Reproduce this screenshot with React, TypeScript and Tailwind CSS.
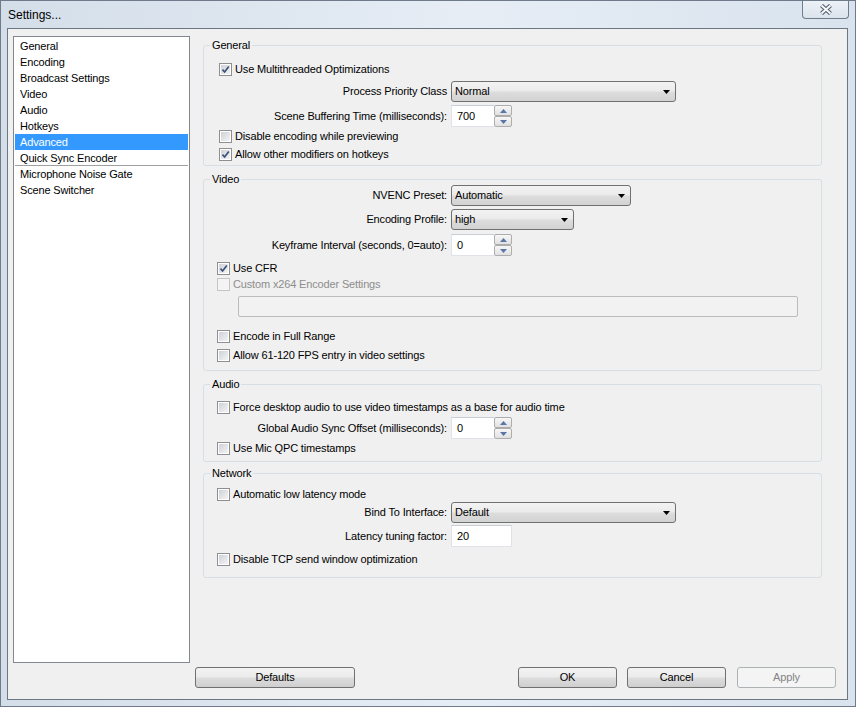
import type { ReactNode } from "react";

const NAV = [
  "General",
  "Encoding",
  "Broadcast Settings",
  "Video",
  "Audio",
  "Hotkeys",
  "Advanced",
  "Quick Sync Encoder",
];
const NAV_EXTRA = ["Microphone Noise Gate", "Scene Switcher"];

function CheckBox({ checked, disabled }: { checked?: boolean; disabled?: boolean }) {
  return (
    <div
      className={`h-[13px] w-[13px] shrink-0 border p-[1px] ${
        disabled ? "border-[#c5c5c5] bg-[#f4f4f4]" : "border-[#8f8f8f] bg-white"
      }`}
    >
      <div
        className={`relative h-full w-full ${
          disabled ? "bg-[#f4f4f4]" : "bg-[linear-gradient(135deg,#cdd1d7,#f4f4f5)]"
        }`}
      >
        {checked && (
          <svg viewBox="0 0 9 9" className="absolute inset-0 h-[9px] w-[9px]">
            <path d="M1.5 4.6 L3.6 7 L7.8 1.4" fill="none" stroke="#3d5279" strokeWidth="1.7" />
          </svg>
        )}
      </div>
    </div>
  );
}

function CheckRow({
  label,
  checked,
  disabled,
  className = "",
}: {
  label: string;
  checked?: boolean;
  disabled?: boolean;
  className?: string;
}) {
  return (
    <div className={"flex h-[16px] items-center " + className}>
      <CheckBox checked={checked} disabled={disabled} />
      <span className={`ml-[3px] whitespace-nowrap ${disabled ? "text-[#8d8d8d]" : ""}`}>{label}</span>
    </div>
  );
}

function FormRow({ label, className = "", children }: { label: string; className?: string; children: ReactNode }) {
  return (
    <div className={"flex items-center " + className}>
      <div className="w-[243px] whitespace-nowrap text-right">{label}</div>
      <div className="ml-[4px]">{children}</div>
    </div>
  );
}

function Combo({ value, className = "" }: { value: string; className?: string }) {
  return (
    <div
      className={
        "flex h-[21px] items-center justify-between rounded-[3px] border border-[#707070] bg-[linear-gradient(#f3f3f3_0%,#ebebeb_48%,#dddddd_52%,#d2d2d2_100%)] pl-[3px] pr-[5px] " +
        className
      }
    >
      <span>{value}</span>
      <svg width="7" height="4" viewBox="0 0 7 4">
        <path d="M0 0 H7 L3.5 4 Z" fill="#000" />
      </svg>
    </div>
  );
}

function SpinBtn({ up }: { up?: boolean }) {
  return (
    <div className="flex h-[11px] w-[18px] items-center justify-center rounded-[2px] border border-[#adadad] bg-[linear-gradient(#f7f7f7,#e1e1e1)]">
      <svg width="7" height="4" viewBox="0 0 7 4">
        <path d={up ? "M0 4 H7 L3.5 0 Z" : "M0 0 H7 L3.5 4 Z"} fill="#5a76a8" />
      </svg>
    </div>
  );
}

function Spin({ value }: { value: string }) {
  return (
    <div className="flex h-[22px] w-[61px]">
      <div className="flex h-full w-[43px] items-center border border-r-0 border-[#dfe3e8] border-t-[#c9ced5] bg-white pl-[5px]">
        {value}
      </div>
      <div className="flex flex-col">
        <SpinBtn up />
        <SpinBtn />
      </div>
    </div>
  );
}

function TextField({ value }: { value: string }) {
  return (
    <div className="flex h-[22px] w-[61px] items-center border border-[#dfe3e8] border-t-[#c9ced5] bg-white pl-[5px]">
      {value}
    </div>
  );
}

function Group({ title, className = "", children }: { title: string; className?: string; children: ReactNode }) {
  return (
    <div className={"relative rounded-[3px] border border-[#d5dfe5] " + className}>
      <span className="absolute -top-[8px] left-[6px] bg-[#f0f0f0] px-[2px] leading-[14px]">{title}</span>
      {children}
    </div>
  );
}

function Button({ label, disabled, className = "" }: { label: string; disabled?: boolean; className?: string }) {
  return (
    <div
      className={
        `flex h-[21px] items-center justify-center rounded-[3px] border ${
          disabled
            ? "border-[#adb2b5] bg-[#f4f4f4] text-[#838383]"
            : "border-[#707070] bg-[linear-gradient(#f3f3f3_0%,#ebebeb_48%,#dddddd_52%,#cfcfcf_100%)]"
        } ` + className
      }
    >
      {label}
    </div>
  );
}

export default function App() {
  return (
    <div className="flex h-[707px] w-[856px] flex-col border border-[#6f7b8a] bg-[linear-gradient(90deg,#d4dee9,#e6edf5_55%,#d9e3ee)] font-['Liberation_Sans',Arial,sans-serif] text-[11px] leading-[13px] tracking-[-0.15px] text-black">
      {/* title bar */}
      <div className="flex h-[27px] shrink-0 items-start justify-between">
        <span className="ml-[7px] mt-[7px] text-[12px] leading-[15px] tracking-normal">Settings...</span>
        <div className="mr-[6px] flex h-[18px] w-[47px] items-center justify-center rounded-b-[4px] border border-t-0 border-[#6f7c8b] bg-[linear-gradient(#edf2f7,#dbe3ec)]">
          <svg width="14" height="11" viewBox="0 0 14 11">
            <path d="M2.5 1.5 L11.5 9.5 M11.5 1.5 L2.5 9.5" stroke="#56606d" strokeWidth="4.2" />
            <path d="M2.5 1.5 L11.5 9.5 M11.5 1.5 L2.5 9.5" stroke="#f7f9fb" strokeWidth="2" />
          </svg>
        </div>
      </div>

      {/* client area */}
      <div className="ml-[6px] mr-[7px] h-[672px] border border-[#6c7784] bg-[#f0f0f0]">
        <div className="flex">
          {/* sidebar list */}
          <div className="ml-[5px] mt-[7px] h-[627px] w-[177px] border border-[#828790] bg-white p-[1px]">
            {NAV.map((item, i) => (
              <div
                key={item}
                className={`h-[16px] pl-[5px] leading-[16px] ${item === "Advanced" ? "bg-[#3399ff] text-white" : ""} ${
                  i === NAV.length - 1 ? "border-b border-[#a0a0a0]" : ""
                }`}
              >
                {item}
              </div>
            ))}
            {NAV_EXTRA.map((item) => (
              <div key={item} className="h-[16px] pl-[5px] leading-[16px]">
                {item}
              </div>
            ))}
          </div>

          {/* settings panel */}
          <div className="ml-[13px] mt-[16px] w-[619px]">
            <Group title="General" className="h-[121px]">
              <CheckRow label="Use Multithreaded Optimizations" checked className="ml-[15px] mt-[15px]" />
              <FormRow label="Process Priority Class" className="mt-[4px]">
                <Combo value="Normal" className="w-[225px]" />
              </FormRow>
              <FormRow label="Scene Buffering Time (milliseconds):" className="mt-[3px]">
                <Spin value="700" />
              </FormRow>
              <CheckRow label="Disable encoding while previewing" className="ml-[15px] mt-[1px]" />
              <CheckRow label="Allow other modifiers on hotkeys" checked className="ml-[15px] mt-[2px]" />
            </Group>

            <Group title="Video" className="mt-[13px] h-[192px]">
              <FormRow label="NVENC Preset:" className="mt-[5px]">
                <Combo value="Automatic" className="w-[180px]" />
              </FormRow>
              <FormRow label="Encoding Profile:" className="mt-[3px]">
                <Combo value="high" className="w-[123px]" />
              </FormRow>
              <FormRow label="Keyframe Interval (seconds, 0=auto):" className="mt-[4px]">
                <Spin value="0" />
              </FormRow>
              <CheckRow label="Use CFR" checked className="ml-[13px] mt-[4px]" />
              <CheckRow label="Custom x264 Encoder Settings" disabled className="ml-[13px]" />
              <div className="ml-[34px] mt-[4px] h-[21px] w-[560px] rounded-[2px] border border-[#bcbcbc] bg-[#f2f2f2]" />
              <CheckRow label="Encode in Full Range" className="ml-[13px] mt-[11px]" />
              <CheckRow label="Allow 61-120 FPS entry in video settings" className="ml-[13px] mt-[3px]" />
            </Group>

            <Group title="Audio" className="mt-[13px] h-[78px]">
              <CheckRow
                label="Force desktop audio to use video timestamps as a base for audio time"
                className="ml-[13px] mt-[14px]"
              />
              <FormRow label="Global Audio Sync Offset (milliseconds):" className="mt-[2px]">
                <Spin value="0" />
              </FormRow>
              <CheckRow label="Use Mic QPC timestamps" className="ml-[13px] mt-[1px]" />
            </Group>

            <Group title="Network" className="mt-[11px] h-[105px]">
              <CheckRow label="Automatic low latency mode" className="ml-[13px] mt-[12px]" />
              <FormRow label="Bind To Interface:">
                <Combo value="Default" className="w-[225px]" />
              </FormRow>
              <FormRow label="Latency tuning factor:" className="mt-[2px]">
                <TextField value="20" />
              </FormRow>
              <CheckRow label="Disable TCP send window optimization" className="ml-[13px] mt-[4px]" />
            </Group>
          </div>
        </div>

        {/* dialog buttons */}
        <div className="mt-[4px] flex">
          <Button label="Defaults" className="ml-[187px] w-[160px]" />
          <Button label="OK" className="ml-[163px] w-[99px]" />
          <Button label="Cancel" className="ml-[10px] w-[99px]" />
          <Button label="Apply" disabled className="ml-[11px] w-[99px]" />
        </div>
      </div>
    </div>
  );
}
